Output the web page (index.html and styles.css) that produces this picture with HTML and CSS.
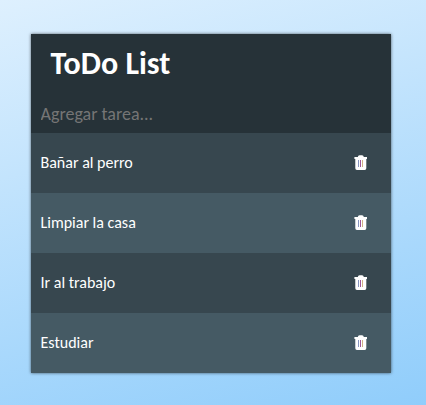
FILE: index.html
```html
<!DOCTYPE html>
<html lang="es">
<head>
<meta charset="utf-8">
<title>ToDo List</title>
<link rel="stylesheet" href="styles.css">
</head>
<body>
<svg width="0" height="0" class="defs" aria-hidden="true">
  <symbol id="trash" viewBox="0 0 14 16">
    <path fill="#fff" fill-rule="evenodd" d="M3.8 2Q4 .2 5.5 .2H8Q9.6 .2 9.8 2H13V4H.4V2ZM1.3 4H12.3V13.2Q12.3 15 10.7 15H3Q1.3 15 1.3 13.2Z"/>
    <path fill="none" stroke="#8795c0" d="M4.5 5V12"/>
    <path fill="none" stroke="#a0579c" d="M6.5 5V12"/>
    <path fill="none" stroke="#d0b285" d="M8.5 5V12"/>
  </symbol>
</svg>
<main class="card">
  <header class="header">
    <h1 class="title">ToDo List</h1>
    <input class="entry" type="text" placeholder="Agregar tarea...">
  </header>
  <ul class="list">
    <li class="task"><span>Bañar al perro</span><svg class="icon"><use href="#trash"/></svg></li>
    <li class="task"><span>Limpiar la casa</span><svg class="icon"><use href="#trash"/></svg></li>
    <li class="task"><span>Ir al trabajo</span><svg class="icon"><use href="#trash"/></svg></li>
    <li class="task"><span>Estudiar</span><svg class="icon"><use href="#trash"/></svg></li>
  </ul>
</main>
</body>
</html>
```
FILE: styles.css
```css
* { box-sizing: border-box; }
body {
  margin: 0;
  height: 405px;
  padding: 34px 35px 32px 31px;
  overflow: hidden;
  background: linear-gradient(165deg, #def0fe, #90cdfb);
  font-family: Carlito, Lato, sans-serif;
  color: #fff;
}
.defs { display: none; }
.card { width: 360px; height: 339px; box-shadow: 0 0 3px rgba(0, 0, 0, .6); }
.header { height: 99px; background: #263238; }
.title {
  margin: 0;
  padding: 10px 19.5px 0;
  height: 60px;
  font-size: 32px;
  line-height: 40px;
}
.entry {
  display: block;
  width: 100%;
  height: 39px;
  padding: 0 9.5px;
  border: 0;
  outline: 0;
  background: transparent;
  font: 18px Carlito, Lato, sans-serif;
}
.entry::placeholder { color: #757575; }
.list { margin: 0; padding: 0; list-style: none; }
.task {
  display: flex;
  align-items: center;
  justify-content: space-between;
  height: 60px;
  padding: 0 23px 0 9.5px;
  background: #37474f;
  font-size: 16px;
}
.task span { padding-bottom: 1px; }
.task:nth-child(even) { background: #455a64; }
.icon { width: 14px; height: 16px; }
```
